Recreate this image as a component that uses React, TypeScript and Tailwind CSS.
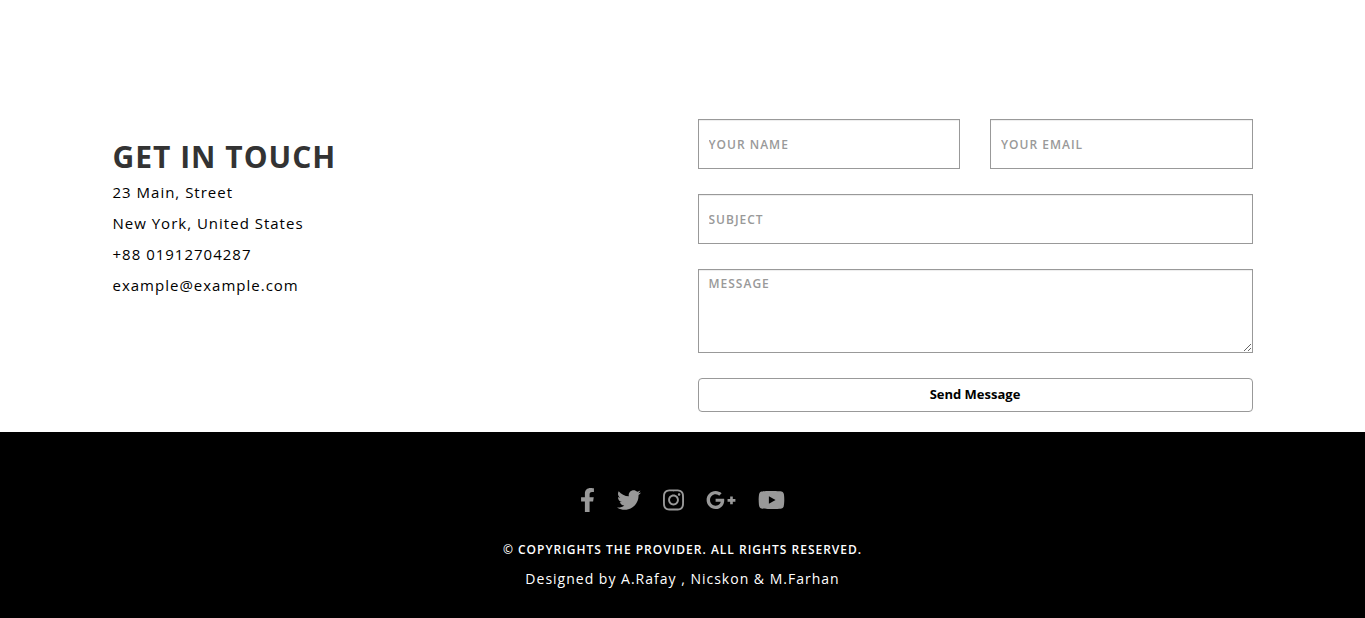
import { FaFacebookF, FaTwitter, FaInstagram, FaGooglePlusG, FaYoutube } from 'react-icons/fa'

const links = [
    { name: 'Facebook',    Icon: FaFacebookF,   width: 'w-[15px]' },
    { name: 'Twitter',     Icon: FaTwitter,     width: 'w-6' },
    { name: 'Instagram',   Icon: FaInstagram,   width: 'w-[21px]' },
    { name: 'Google Plus', Icon: FaGooglePlusG, width: 'w-[30px]' },
    { name: 'YouTube',     Icon: FaYoutube,     width: 'w-[27px]' },
]

const field = 'block w-full border border-[#999] bg-white px-2.5 text-xs font-semibold tracking-[1px] text-[#555] shadow-[inset_0_1px_1px_rgba(0,0,0,0.075)] outline-none placeholder:text-[#999]'

const Contact = () => {
    return (
        <section className="mx-auto grid max-w-[1170px] gap-[30px] px-[15px] pt-[119px] pb-5 md:grid-cols-2">
            <div className="pt-5">
                <h2 className="text-[30px] leading-9 font-bold tracking-[1px] text-[#333]">GET IN TOUCH</h2>
                <address className="mt-0.5 text-[15px] leading-[31px] tracking-[1px] not-italic">
                    <p>23 Main, Street</p>
                    <p>New York, United States</p>
                    <p>+88 01912704287</p>
                    <p><a href="mailto:example@example.com">example@example.com</a></p>
                </address>
            </div>
            <form className="flex flex-col gap-[25px]" onSubmit={(e) => e.preventDefault()}>
                <div className="grid grid-cols-2 gap-[30px]">
                    <input type="text" name="name" aria-label="Your name" placeholder="YOUR NAME" className={`${field} h-[50px]`} />
                    <input type="email" name="email" aria-label="Your email" placeholder="YOUR EMAIL" className={`${field} h-[50px]`} />
                </div>
                <input type="text" name="subject" aria-label="Subject" placeholder="SUBJECT" className={`${field} h-[50px]`} />
                <textarea name="message" aria-label="Message" placeholder="MESSAGE" className={`${field} h-[84px] resize py-1.5`} />
                <button type="submit" className="h-[34px] rounded border border-[#999] bg-white text-[13px] font-bold text-black">Send Message</button>
            </form>
        </section>
    )
}

const Footer = () => {
    return (
        <footer className="flex flex-col items-center bg-black px-4 pt-14 pb-7 text-white">
            <ul className="flex gap-[22px]">
                {links.map(({ name, Icon, width }) => (
                    <li key={name}>
                        <a href="#" aria-label={name} className="block text-[#999]"><Icon className={`h-6 ${width}`} /></a>
                    </li>
                ))}
            </ul>
            <p className="mt-7 text-xs leading-5 font-semibold tracking-[1px]">© COPYRIGHTS THE PROVIDER. ALL RIGHTS RESERVED.</p>
            <p className="mt-2 text-sm leading-[22px] tracking-[1px]">Designed by A.Rafay , Nicskon &amp; M.Farhan</p>
        </footer>
    )
}

const App = () => {
    return (
        <main className="bg-white font-['Open_Sans',sans-serif] text-black">
            <Contact />
            <Footer />
        </main>
    )
}

export default App
